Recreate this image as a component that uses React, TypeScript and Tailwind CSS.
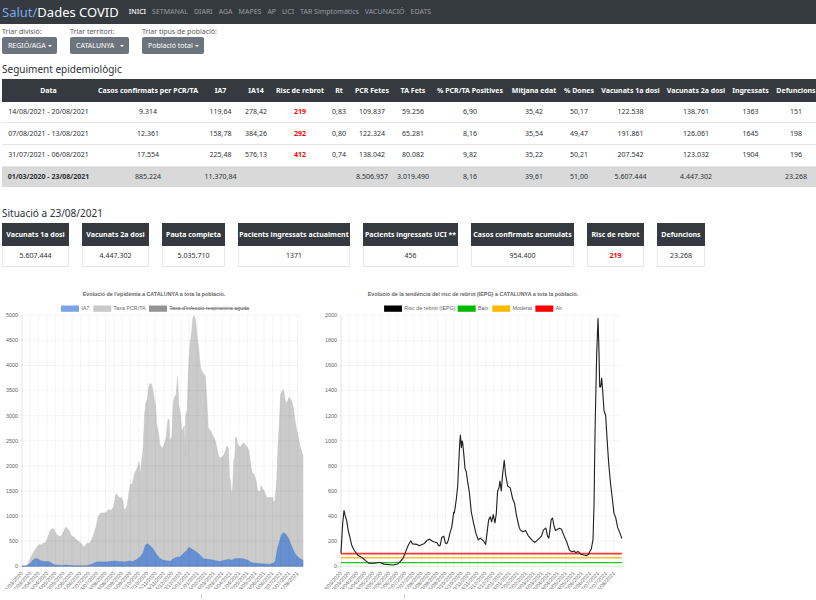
import React from "react";

type Point = [number, number];

const navItems = [
  "INICI",
  "SETMANAL",
  "DIARI",
  "AGA",
  "MAPES",
  "AP",
  "UCI",
  "TAR Simptomàtics",
  "VACUNACIÓ",
  "EDATS",
];

const filters = [
  { id: "divisio", label: "Triar divisió:", value: "REGIÓ/AGA", width: "w-[55px]" },
  { id: "territori", label: "Triar territori:", value: "CATALUNYA", width: "w-[59px]" },
  { id: "poblacio", label: "Triar tipus de població:", value: "Població total", width: "w-[62px]" },
];

const columns = [
  { title: "Data", width: "w-[93px]" },
  { title: "Casos confirmats per PCR/TA", width: "w-[106px]" },
  { title: "IA7", width: "w-[39px]" },
  { title: "IA14", width: "w-[32px]" },
  { title: "Risc de rebrot", width: "w-[56px]" },
  { title: "Rt", width: "w-[22px]" },
  { title: "PCR Fetes", width: "w-[44px]" },
  { title: "TA Fets", width: "w-[38px]" },
  { title: "% PCR/TA Positives", width: "w-[76px]" },
  { title: "Mitjana edat", width: "w-[52px]" },
  { title: "% Dones", width: "w-[38px]" },
  { title: "Vacunats 1a dosi", width: "w-[65px]" },
  { title: "Vacunats 2a dosi", width: "w-[66px]" },
  { title: "Ingressats", width: "w-[43px]" },
  { title: "Defuncions", width: "w-[48px]" },
];

const RISK_COLUMN = 4;

const rows = [
  ["14/08/2021 - 20/08/2021", "9.314", "119,64", "278,42", "219", "0,83", "109.837", "59.256", "6,90", "35,42", "50,17", "122.538", "138.761", "1363", "151"],
  ["07/08/2021 - 13/08/2021", "12.361", "158,78", "384,26", "292", "0,80", "122.324", "65.281", "8,16", "35,54", "49,47", "191.861", "126.061", "1645", "198"],
  ["31/07/2021 - 06/08/2021", "17.554", "225,48", "576,13", "412", "0,74", "138.042", "80.082", "9,82", "35,22", "50,21", "207.542", "123.032", "1904", "196"],
];

const totals = ["01/03/2020 - 23/08/2021", "885.224", "11.370,84", "", "", "", "8.506.957", "3.019.490", "8,16", "39,61", "51,00", "5.607.444", "4.447.302", "", "23.268"];

const summary = [
  { title: "Vacunats 1a dosi", value: "5.607.444", width: "w-[67px]" },
  { title: "Vacunats 2a dosi", value: "4.447.302", width: "w-[67px]" },
  { title: "Pauta completa", value: "5.035.710", width: "w-[63px]" },
  { title: "Pacients ingressats actualment", value: "1371", width: "w-[112px]" },
  { title: "Pacients ingressats UCI **", value: "456", width: "w-[95px]" },
  { title: "Casos confirmats acumulats", value: "954.400", width: "w-[103px]" },
  { title: "Risc de rebrot", value: "219", width: "w-[57px]", alert: true },
  { title: "Defuncions", value: "23.268", width: "w-[48px]" },
];

// Series points are [position on the time axis, value]
const taxaPcr: Point[] = [
  [66, 0], [80, 10], [90, 130], [95, 210], [100, 270], [107, 350], [118, 435], [124, 425], [130, 460], [138, 480],
  [143, 560], [150, 700], [155, 740], [161, 755], [166, 680], [172, 620], [180, 595], [186, 620], [192, 700], [197, 775],
  [201, 770], [208, 710], [214, 610], [224, 575], [232, 520], [240, 480], [246, 440], [250, 395], [255, 395], [261, 460],
  [268, 455], [275, 520], [282, 640], [290, 810], [295, 980], [303, 1060], [318, 1065], [326, 1130], [334, 1110], [342, 1190],
  [345, 1300], [348, 1430], [352, 1430], [357, 1370], [365, 1365], [370, 1290], [372, 1140], [376, 1130], [382, 1200], [388, 1480],
  [392, 1640], [398, 1640], [405, 1850], [413, 1970], [418, 2080], [421, 1860], [424, 1980], [430, 2330], [435, 3050], [439, 3270],
  [443, 3320], [447, 3580], [452, 3650], [457, 3600], [463, 3370], [467, 3250], [471, 2830], [476, 2680], [481, 2420], [487, 2350],
  [491, 2380], [497, 2500], [500, 2600], [505, 2930], [508, 2930], [511, 2500], [517, 2580], [521, 3270], [526, 3390], [530, 3430],
  [534, 3780], [537, 3240], [542, 3050], [547, 2690], [554, 2800], [556, 2200], [558, 3000], [563, 3130], [566, 3800], [571, 4400],
  [576, 4650], [580, 4950], [584, 5000], [588, 4900], [593, 4550], [597, 4350], [603, 3950], [609, 3860], [617, 3790], [621, 3400],
  [626, 2760], [633, 2700], [640, 2600], [648, 2480], [653, 2330], [658, 2170], [665, 2160], [674, 2230], [683, 2400], [687, 2330],
  [690, 1780], [693, 1700], [696, 1420], [700, 1600], [703, 2130], [706, 2150], [708, 2520], [711, 2580], [714, 2440], [722, 2370],
  [732, 2460], [740, 2400], [748, 2320], [754, 2000], [758, 1870], [764, 1830], [770, 1700], [775, 1500], [782, 1490], [785, 1610],
  [790, 1540], [795, 1480], [802, 1370], [820, 1370], [823, 1250], [827, 1320], [832, 1700], [836, 2400], [840, 2850], [844, 3430],
  [852, 3530], [858, 3290], [864, 3260], [869, 3370], [876, 3310], [882, 3160], [888, 2850], [896, 2600], [902, 2400], [911, 2200],
];

const ia7: Point[] = [
  [66, 0], [80, 5], [90, 50], [97, 110], [105, 155], [112, 150], [122, 110], [135, 95], [147, 95], [155, 60],
  [165, 25], [185, 18], [200, 25], [220, 10], [250, 8], [262, 12], [275, 40], [288, 80], [300, 90], [320, 85],
  [345, 105], [375, 88], [387, 105], [400, 95], [412, 140], [422, 190], [430, 270], [437, 420], [443, 450], [450, 420],
  [460, 350], [470, 240], [480, 160], [490, 120], [512, 100], [521, 150], [535, 190], [541, 180], [550, 250], [560, 300],
  [568, 380], [575, 350], [585, 310], [597, 250], [612, 150], [635, 130], [660, 95], [687, 140], [697, 120], [706, 155],
  [732, 150], [745, 120], [757, 70], [785, 50], [810, 42], [822, 60], [828, 110], [834, 350], [840, 480], [846, 620],
  [852, 670], [860, 640], [867, 560], [878, 380], [888, 240], [900, 160], [911, 120],
];

const risc: Point[] = [
  [64, 105], [69, 340], [73, 445], [76, 410], [81, 365], [86, 280], [91, 230], [96, 170], [103, 130], [110, 105],
  [116, 85], [128, 68], [138, 45], [148, 24], [165, 24], [180, 32], [193, 17], [220, 10], [234, 18], [250, 60],
  [257, 105], [264, 155], [270, 185], [274, 203], [279, 178], [292, 175], [299, 163], [315, 182], [322, 205], [330, 216],
  [342, 195], [353, 188], [357, 165], [362, 165], [367, 230], [373, 240], [378, 185], [382, 180], [387, 210], [391, 260],
  [397, 310], [403, 430], [405, 425], [411, 540], [415, 640], [418, 820], [421, 980], [423, 1045], [426, 945], [428, 1000],
  [430, 985], [433, 900], [437, 780], [441, 750], [445, 670], [450, 590], [456, 430], [463, 340], [470, 260], [477, 210],
  [483, 225], [493, 200], [499, 175], [503, 260], [508, 370], [513, 395], [517, 355], [522, 412], [527, 345], [531, 420],
  [535, 600], [539, 625], [542, 680], [546, 600], [550, 730], [555, 845], [559, 730], [565, 640], [573, 625], [580, 540],
  [586, 500], [592, 400], [600, 310], [603, 290], [611, 275], [619, 285], [628, 240], [640, 205], [647, 190], [656, 212],
  [667, 240], [673, 290], [680, 305], [685, 240], [689, 225], [692, 280], [696, 370], [700, 385], [704, 330], [709, 285],
  [721, 303], [727, 295], [735, 240], [742, 200], [751, 130], [758, 115], [765, 122], [770, 108], [777, 118], [784, 98],
  [797, 88], [803, 85], [809, 100], [817, 140], [822, 215], [825, 500], [827, 900], [829, 1200], [833, 1700], [837, 1975],
  [840, 1700], [842, 1430], [845, 1430], [848, 1500], [851, 1400], [855, 1240], [860, 1200], [864, 1020], [869, 820], [875, 650],
  [880, 540], [885, 420], [890, 390], [896, 310], [902, 270], [909, 220],
];

// Plot area in chart units
const LEFT = 49;
const RIGHT = 675;
const TOP = 61;
const BOTTOM = 620;

const dateLabels = (start: number, stepDays: number, count: number) =>
  Array.from({ length: count }, (_, i) => {
    const d = new Date(start + i * stepDays * 86400000);
    const day = String(d.getUTCDate()).padStart(2, "0");
    const month = String(d.getUTCMonth() + 1).padStart(2, "0");
    return `${day}/${month}/${d.getUTCFullYear()}`;
  });

const toLine = (points: Point[], max: number) => {
  const first = points[0][0];
  const span = points[points.length - 1][0] - first;
  return points
    .map(([t, v]) => {
      const x = LEFT + ((t - first) / span) * (RIGHT - LEFT);
      const y = BOTTOM - (v / max) * (BOTTOM - TOP);
      return `${x.toFixed(1)},${y.toFixed(1)}`;
    })
    .join(" ");
};

const toArea = (points: Point[], max: number) =>
  `${LEFT},${BOTTOM} ${toLine(points, max)} ${RIGHT},${BOTTOM}`;

interface LegendItem {
  label: string;
  color: string;
  x: number;
  hidden?: boolean;
}

interface ChartProps {
  title: string;
  legend: LegendItem[];
  max: number;
  step: number;
  labels: string[];
  labelGap: number;
  children: React.ReactNode;
}

const Chart: React.FC<ChartProps> = ({ title, legend, max, step, labels, labelGap, children }) => {
  const ticks = Array.from({ length: max / step + 1 }, (_, i) => i * step);

  return (
    <svg
      viewBox="0 0 709 671"
      role="img"
      aria-label={title}
      className="w-[39%] shrink-0 overflow-hidden font-['Liberation_Sans',sans-serif] text-[12px]"
      fill="#666"
    >
      <text x="343" y="18" textAnchor="middle" fontWeight="bold">
        {title}
      </text>
      {legend.map((item) => (
        <g key={item.label}>
          <rect x={item.x} y="39" width="40" height="14" fill={item.color} />
          <text x={item.x + 45} y="50" textDecoration={item.hidden ? "line-through" : undefined}>
            {item.label}
          </text>
        </g>
      ))}

      {children}

      {ticks.map((tick) => {
        const y = BOTTOM - (tick / max) * (BOTTOM - TOP);
        return (
          <g key={tick}>
            <line x1={LEFT - 9} x2={RIGHT} y1={y} y2={y} stroke="#000" strokeOpacity={tick ? 0.1 : 0.25} />
            <text x={LEFT - 9} y={y + 4} textAnchor="end">
              {tick}
            </text>
          </g>
        );
      })}
      {labels.map((label, i) => {
        const x = LEFT + i * labelGap;
        return (
          <g key={label}>
            <line x1={x} x2={x} y1={TOP} y2={BOTTOM + 9} stroke="#000" strokeOpacity={i ? 0.1 : 0.25} />
            <text transform={`translate(${x + 3} ${BOTTOM + 16}) rotate(-48)`} textAnchor="end">
              {label}
            </text>
          </g>
        );
      })}
    </svg>
  );
};

const App: React.FC = () => {
  return (
    <div className="bg-white text-[#2c3136] font-['Noto_Sans',sans-serif] text-[7px] leading-[10px] overflow-hidden">
      <header className="flex items-center gap-[10px] h-6 px-[2px] bg-[#343a40]">
        <a href="#" className="text-[13px] leading-6 text-white whitespace-nowrap">
          <span className="text-[#7ba7ee]">Salut/</span>Dades COVID
        </a>
        <nav className="flex gap-[6px] whitespace-nowrap">
          {navItems.map((item, index) => (
            <a key={item} href="#" className={index === 0 ? "text-white font-medium" : "text-[#9a9da0]"}>
              {item}
            </a>
          ))}
        </nav>
      </header>

      <main className="pl-[2px]">
        <form className="flex gap-[13px] pt-[3px]">
          {filters.map((filter) => (
            <div key={filter.id} className="flex flex-col">
              <label htmlFor={filter.id} className="whitespace-nowrap text-[#555a5f]">
                {filter.label}
              </label>
              <div className={`relative ${filter.width}`}>
                <select
                  id={filter.id}
                  className="block w-full h-[17px] pl-[6px] appearance-none rounded-[2px] bg-[#6c757d] text-white"
                >
                  <option>{filter.value}</option>
                </select>
                <svg viewBox="0 0 4 2" className="absolute right-[5px] top-2 w-1 h-[2px] pointer-events-none">
                  <path d="M0 0h4L2 2z" fill="#fff" />
                </svg>
              </div>
            </div>
          ))}
        </form>

        <h2 className="mt-2 mb-[2px] text-[10px] leading-[15px]">Seguiment epidemiològic</h2>
        <table className="table-fixed w-full min-w-[818px] h-[108px] text-center whitespace-nowrap">
          <thead>
            <tr className="bg-[#343a40] text-white">
              {columns.map((column) => (
                <th key={column.title} scope="col" className={`h-[23px] p-0 font-bold ${column.width}`}>
                  {column.title}
                </th>
              ))}
            </tr>
          </thead>
          <tbody>
            {rows.map((row) => (
              <tr key={row[0]} className="border-b border-[#e4e6e8]">
                {row.map((cell, index) => (
                  <td key={index} className={index === RISK_COLUMN ? "p-0 font-bold text-[#ff0000]" : "p-0"}>
                    {cell}
                  </td>
                ))}
              </tr>
            ))}
            <tr className="bg-[#d9d9d9]">
              {totals.map((cell, index) => (
                <td key={index} className={index === 0 ? "p-0 font-bold" : "p-0"}>
                  {cell}
                </td>
              ))}
            </tr>
          </tbody>
        </table>

        <h2 className="mt-[19px] mb-[2px] text-[10px] leading-[15px]">Situació a 23/08/2021</h2>
        <div className="flex gap-[13px] text-center whitespace-nowrap">
          {summary.map((card) => (
            <dl key={card.title} className={`shrink-0 border border-[#e4e6e8] ${card.width}`}>
              <dt className="-mx-px -mt-px bg-[#343a40] text-white font-bold leading-[23px]">{card.title}</dt>
              <dd className={card.alert ? "leading-[20px] font-bold text-[#ff0000]" : "leading-[20px]"}>
                {card.value}
              </dd>
            </dl>
          ))}
        </div>
      </main>

      <section className="flex gap-px mt-[21px]">
        <Chart
          title="Evolució de l'epidèmia a CATALUNYA a tota la població."
          legend={[
            { label: "IA7", color: "#7ba3e6", x: 136 },
            { label: "Taxa PCR/TA", color: "#c9c9c9", x: 208 },
            { label: "Taxa d'infecció respiratòria aguda", color: "#949494", x: 332, hidden: true },
          ]}
          max={5000}
          step={500}
          labels={dateLabels(Date.UTC(2020, 2, 1), 16, 34)}
          labelGap={18.6}
        >
          <polygon points={toArea(taxaPcr, 5000)} fill="#cbcbcb" stroke="#bdbdbd" />
          <polygon points={toArea(ia7, 5000)} fill="#6690d2" stroke="#5580c8" />
        </Chart>
        <Chart
          title="Evolució de la tendència del risc de rebrot (IEPG) a CATALUNYA a tota la població."
          legend={[
            { label: "Risc de rebrot (IEPG)", color: "#000", x: 145 },
            { label: "Baix", color: "#00bb00", x: 309 },
            { label: "Moderat", color: "#ffb800", x: 386 },
            { label: "Alt", color: "#ff0000", x: 482 },
          ]}
          max={2000}
          step={200}
          labels={dateLabels(Date.UTC(2020, 2, 14), 15, 35)}
          labelGap={17.9}
        >
          <polyline points={`${LEFT},592 ${RIGHT},592`} stroke="#ff3b30" strokeWidth="4" />
          <polyline points={`${LEFT},601 ${RIGHT},601`} stroke="#ffc233" strokeWidth="3" />
          <polyline points={`${LEFT},612 ${RIGHT},612`} stroke="#22c522" strokeWidth="3" />
          <polyline points={toLine(risc, 2000)} fill="none" stroke="#222" strokeWidth="2.5" strokeLinejoin="round" />
        </Chart>
      </section>

      <div className="flex mt-[5px] h-[5px]">
        <div className="w-[202px] border-r border-[#ced4da]" />
        <div className="w-[203px] border-r border-[#ced4da]" />
      </div>
    </div>
  );
};

export default App;
